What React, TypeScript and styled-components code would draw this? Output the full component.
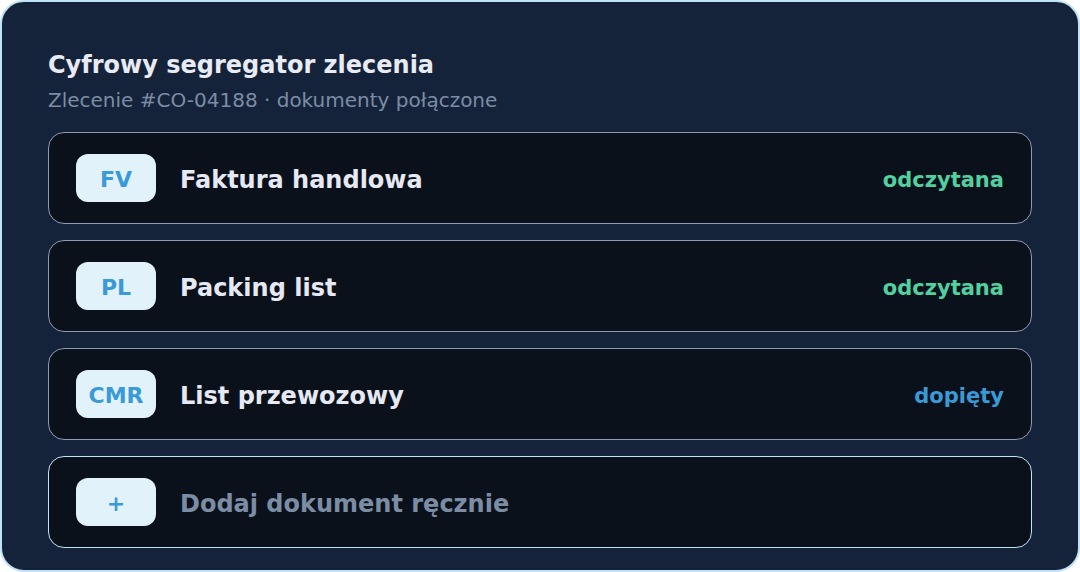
import React from 'react';
import styled, { createGlobalStyle } from 'styled-components';

const GlobalStyle = createGlobalStyle`
  html, body {
    margin: 0;
    padding: 0;
    background: #ffffff;
  }
  body {
    font-family: "DejaVu Sans", "Liberation Sans", sans-serif;
  }
`;

type Tone = 'read' | 'attached';

interface Doc {
  code: string;
  name: string;
  status: string;
  tone: Tone;
}

const docs: Doc[] = [
  { code: 'FV', name: 'Faktura handlowa', status: 'odczytana', tone: 'read' },
  { code: 'PL', name: 'Packing list', status: 'odczytana', tone: 'read' },
  { code: 'CMR', name: 'List przewozowy', status: 'dopięty', tone: 'attached' },
];

const Panel = styled.div`
  box-sizing: border-box;
  width: 1080px;
  height: 572px;
  border: 2px solid #bfe2f6;
  border-radius: 24px;
  background: #15233a;
  padding: 47px 46px 22px 46px;
  display: flex;
  flex-direction: column;
`;

const Title = styled.h1`
  margin: 0;
  font-size: 24px;
  line-height: 32px;
  font-weight: 700;
  color: #e8eaf4;
`;

const Subtitle = styled.div`
  margin-top: 5px;
  font-size: 20px;
  line-height: 28px;
  color: #7b8da4;
`;

const List = styled.div`
  margin-top: 18px;
  display: flex;
  flex-direction: column;
  gap: 16px;
`;

const Row = styled.div<{ $accent?: boolean }>`
  box-sizing: border-box;
  height: 92px;
  display: flex;
  align-items: center;
  padding: 0 27px;
  border: 1px solid ${(p) => (p.$accent ? '#bfe2f6' : '#8a9bb4')};
  border-radius: 16px;
  background: #0b111b;
`;

const Badge = styled.div`
  flex: none;
  box-sizing: border-box;
  width: 80px;
  height: 48px;
  padding-top: 2px;
  border-radius: 12px;
  background: #e2f2fb;
  color: #3a9ad8;
  font-size: 22px;
  font-weight: 700;
  display: flex;
  align-items: center;
  justify-content: center;
`;

const Name = styled.div<{ $muted?: boolean }>`
  margin-left: 24px;
  padding-top: 3px;
  flex: 1;
  font-size: 24px;
  font-weight: 700;
  color: ${(p) => (p.$muted ? '#7b8da4' : '#e6e9f3')};
`;

const Status = styled.div<{ $tone: Tone }>`
  padding-top: 3px;
  font-size: 21px;
  font-weight: 700;
  color: ${(p) => (p.$tone === 'read' ? '#52d0a0' : '#3a9ad8')};
`;

export default function App() {
  return (
    <>
      <GlobalStyle />
      <Panel>
        <Title>Cyfrowy segregator zlecenia</Title>
        <Subtitle>Zlecenie #CO-04188 · dokumenty połączone</Subtitle>
        <List>
          {docs.map((d) => (
            <Row key={d.code}>
              <Badge>{d.code}</Badge>
              <Name>{d.name}</Name>
              <Status $tone={d.tone}>{d.status}</Status>
            </Row>
          ))}
          <Row $accent>
            <Badge>+</Badge>
            <Name $muted>Dodaj dokument ręcznie</Name>
          </Row>
        </List>
      </Panel>
    </>
  );
}
